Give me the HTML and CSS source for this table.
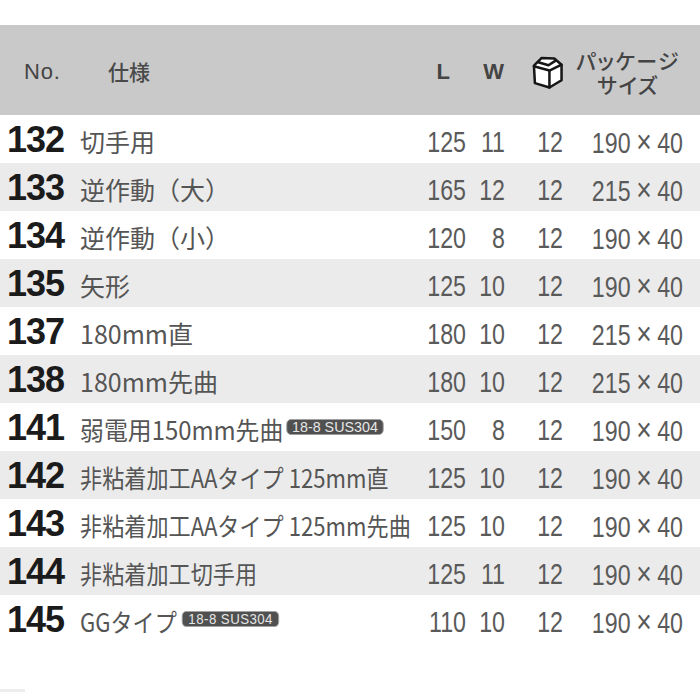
FILE: index.html
```html
<!DOCTYPE html>
<html lang="ja">
<head>
<meta charset="utf-8">
<link rel="stylesheet" href="styles.css">
</head>
<body>
<div class="sheet">
  <div class="table">
    <div class="head">
      <div class="h-no">No.</div>
      <div class="h-spec">仕様</div>
      <div class="h-l">L</div>
      <div class="h-w">W</div>
      <div class="h-box">
        <svg width="31" height="34" viewBox="-1 -1 32 35" fill="none" stroke="#161616" stroke-width="2.6" stroke-linejoin="round" stroke-linecap="round">
          <path d="M1,10 L9,2 L22,2.5 L29.5,9 L29.5,25 L17,32.5 L2,28 Z" fill="#fff"/>
          <path d="M1,10.5 L17,15 L29.5,9"/>
          <path d="M17,15 L17,32.5"/>
          <path d="M5.5,6.5 L16,9.5 L23,5"/>
        </svg>
      </div>
      <div class="h-pkg"><div class="pkg-line">パッケージ</div><div class="pkg-line">サイズ</div></div>
    </div>
    <div class="row"><div class="no">132</div><div class="spec">切手用</div><div class="n">125</div><div class="n">11</div><div class="n">12</div><div class="n">190<span class="x">×</span>40</div></div>
    <div class="row alt"><div class="no">133</div><div class="spec">逆作動（大）</div><div class="n">165</div><div class="n">12</div><div class="n">12</div><div class="n">215<span class="x">×</span>40</div></div>
    <div class="row"><div class="no">134</div><div class="spec">逆作動（小）</div><div class="n">120</div><div class="n">8</div><div class="n">12</div><div class="n">190<span class="x">×</span>40</div></div>
    <div class="row alt"><div class="no">135</div><div class="spec">矢形</div><div class="n">125</div><div class="n">10</div><div class="n">12</div><div class="n">190<span class="x">×</span>40</div></div>
    <div class="row"><div class="no">137</div><div class="spec">180mm直</div><div class="n">180</div><div class="n">10</div><div class="n">12</div><div class="n">215<span class="x">×</span>40</div></div>
    <div class="row alt"><div class="no">138</div><div class="spec">180mm先曲</div><div class="n">180</div><div class="n">10</div><div class="n">12</div><div class="n">215<span class="x">×</span>40</div></div>
    <div class="row"><div class="no">141</div><div class="spec fit-a">弱電用150mm先曲<span class="badge">18-8 SUS304</span></div><div class="n">150</div><div class="n">8</div><div class="n">12</div><div class="n">190<span class="x">×</span>40</div></div>
    <div class="row alt"><div class="no">142</div><div class="spec fit-b">非粘着加工AAタイプ 125mm直</div><div class="n">125</div><div class="n">10</div><div class="n">12</div><div class="n">190<span class="x">×</span>40</div></div>
    <div class="row"><div class="no">143</div><div class="spec fit-b">非粘着加工AAタイプ 125mm先曲</div><div class="n">125</div><div class="n">10</div><div class="n">12</div><div class="n">190<span class="x">×</span>40</div></div>
    <div class="row alt"><div class="no">144</div><div class="spec fit-b">非粘着加工切手用</div><div class="n">125</div><div class="n">11</div><div class="n">12</div><div class="n">190<span class="x">×</span>40</div></div>
    <div class="row"><div class="no">145</div><div class="spec fit-b">GGタイプ<span class="badge">18-8 SUS304</span></div><div class="n">110</div><div class="n">10</div><div class="n">12</div><div class="n">190<span class="x">×</span>40</div></div>
  </div>
  <div class="mark"></div>
</div>
</body>
</html>
```

FILE: styles.css
```css
html, body {
  margin: 0;
  padding: 0;
  background: #fff;
}

.sheet {
  width: 700px;
  height: 700px;
  padding-top: 25px;
  box-sizing: border-box;
  overflow: hidden;
}

.head,
.row {
  display: grid;
  grid-template-columns: 73px 336px 50px 39px 58px 120px;
  padding: 0 17px 0 7px;
  align-items: center;
}

.head {
  height: 90px;
  background: #c9c9c9;
  color: #444;
}

.h-no {
  font-family: "Liberation Sans", Arial, sans-serif;
  font-size: 22px;
  padding-left: 17px;
  letter-spacing: 0.8px;
  margin-top: 4px;
}

.h-spec {
  font-family: "Noto Sans CJK JP", sans-serif;
  font-size: 21px;
  font-weight: 500;
  padding-left: 28px;
  color: #4a4a4a;
  margin-top: 2px;
}

.h-l,
.h-w {
  font-family: "Liberation Sans", Arial, sans-serif;
  font-weight: bold;
  font-size: 22px;
  text-align: right;
  margin-top: 4px;
}

.h-l {
  padding-right: 16px;
}

.h-w {
  padding-right: 0;
  letter-spacing: 1px;
}

.h-box {
  display: flex;
  justify-content: flex-end;
  margin-top: 3px;
}

.h-pkg {
  font-family: "Noto Sans CJK JP", sans-serif;
  font-feature-settings: "palt";
  font-size: 21px;
  font-weight: 500;
  text-align: center;
  padding-left: 10px;
  letter-spacing: 1.4px;
  white-space: nowrap;
  color: #444;
  margin-top: 3px;
}

.pkg-line {
  height: 24px;
  line-height: 24px;
}

.row {
  height: 48px;
}

.row.alt {
  background: #ebebeb;
}

.no {
  font-family: "Liberation Sans", Arial, sans-serif;
  font-weight: bold;
  font-size: 36px;
  letter-spacing: -1px;
  color: #1b1b1b;
  line-height: 1;
  margin-top: 2px;
}

.spec {
  font-family: "Noto Sans CJK JP", sans-serif;
  font-size: 25px;
  color: #555;
  white-space: nowrap;
  line-height: 30px;
  margin-top: 4px;
  display: flex;
  align-items: center;
  transform-origin: left center;
}

.spec.fit-a {
  transform: scaleX(0.955);
}

.spec.fit-b {
  transform: scaleX(0.885);
}

.badge {
  display: inline-block;
  font-family: "Liberation Sans", Arial, sans-serif;
  font-size: 15px;
  line-height: 14px;
  padding: 0 5px;
  margin-left: 3px;
  margin-top: -5px;
  background: #505050;
  color: #e6e6e6;
  border: 1px solid #a0a0a0;
  border-radius: 5px;
}

.fit-b .badge {
  letter-spacing: 0.5px;
  padding: 0 6px;
  margin-left: 6px;
}

.n {
  font-family: "Liberation Sans", Arial, sans-serif;
  font-size: 29px;
  color: #5a5a5a;
  text-align: right;
  white-space: nowrap;
  transform: scaleX(0.8);
  transform-origin: right center;
  margin-top: 6px;
}

.x {
  font-size: 33px;
  margin: 0 7px;
}

.mark {
  width: 25px;
  height: 3px;
  margin-top: 46px;
  background: #ededed;
}
```
